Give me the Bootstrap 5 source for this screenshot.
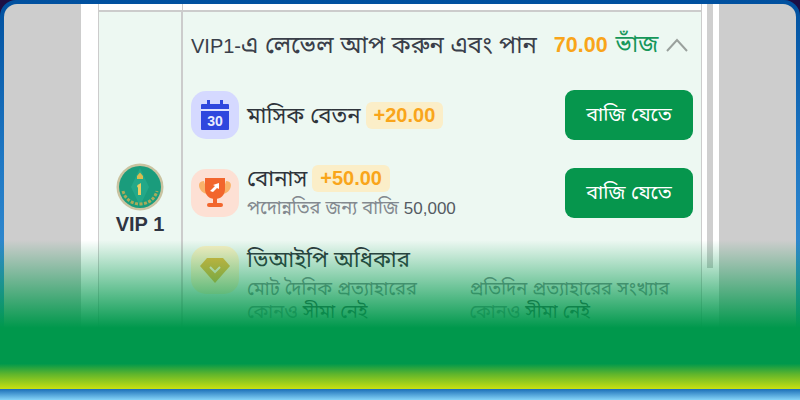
<!DOCTYPE html>
<html lang="bn">
  <head>
    <meta charset="UTF-8" />
    <title>VIP</title>
    <link
      rel="stylesheet"
      href="https://cdn.jsdelivr.net/npm/bootstrap@5.3.0/dist/css/bootstrap.min.css"
    />
    <style>
      html, body { margin: 0; height: 400px; overflow: hidden; }
      body {
        width: 800px;
        font-family: "Liberation Sans", "Noto Sans Bengali", "Noto Sans", "DejaVu Sans", sans-serif;
        background: #1c0f45;
      }
      .stage {
        height: 400px; padding: 4px 4px 0; position: relative; border-radius: 16px 16px 0 0;
        background: linear-gradient(180deg, #00509f 0%, #1f78c4 40%, #4ba3df 100%);
      }
      .shade-box { height: 396px; background: #cdcdcd; border-radius: 13px 13px 0 0; padding: 0 77px 0 77px; }
      .sheet { height: 396px; background: #fff; padding: 0 0 0 17px; }
      .scroll-track { width: 16px; background: #fff; padding: 0 0 0 5px; flex: none; }
      .scroll-thumb { width: 6px; height: 264px; background: #cfcfcf; }
      .vip-table { width: 604px; flex: none; border-left: 1px solid #ccc; border-right: 1px solid #ccc; }
      .vip-top { height: 6px; flex: none; border-bottom: 2px solid #ccc; box-sizing: content-box; }
      .vip-top-left { width: 84px; border-right: 1px solid #ccc; }
      .vip-row { background: #edf8f2; height: 390px; }
      .vip-side { width: 84px; flex: none; border-right: 2px solid #ccc; padding-top: 151px; }
      .vip-name { font-size: 20px; line-height: 24px; font-weight: 700; color: #2f3542; margin-top: 1px; }
      .vip-main { padding: 0 8px 0 8px; }
      .head-line { height: 66px; font-size: 20px; color: #3a3f4a; margin-bottom: 12px; white-space: nowrap; }
      .bn-big { font-size: 23.8px; }
      .gold { color: #f9a51a; font-weight: 700; font-size: 21.5px; margin-left: 17px; }
      .fold { color: #16975a; font-size: 23.4px; }
      .perk-line { min-height: 50px; margin-bottom: 27px; }
      .perk-second { margin-bottom: 28px; }
      .perk-ico { width: 48px; height: 48px; flex: none; border-radius: 15px; }
      .ico-blue { background: #d5d9ff; }
      .ico-peach { background: #fde0d4; }
      .ico-gold { background: #fbf0c4; }
      .perk-title { font-size: 22.2px; line-height: 27px; color: #2f343b; white-space: nowrap; }
      .perk-note { font-size: 18.3px; line-height: 23px; color: #83898f; white-space: nowrap; }
      .perk-stack { margin: -2px 0; }
      .perk-stack .perk-note { margin-top: 4px; }
      .note-num { font-size: 17px; color: #555b63; }
      .note-dark { color: #3c4148; }
      .perk-cols { width: 445px; }
      .bonus-tag { background: #fbeec8; color: #f9a51a; font-size: 20px; font-weight: 700; line-height: 27px; border-radius: 6px; padding: 0 8px; margin-left: 5px; }
      .go-btn { width: 128px; height: 50px; background: #06964d; border: 0; border-radius: 9px; color: #fff; font-size: 19.8px; padding: 0; flex: none; margin-left: auto; }
      .go-btn:hover { background: #06964d; color: #fff; }
      .fade-band {
        position: absolute; left: 0; right: 0; top: 240px; height: 149px;
        background: linear-gradient(180deg,
          rgba(0,152,76,0) 0%, #00984c 59%,
          #00984c 83%, #5fb52c 90%, #c9e011 100%);
      }
      .sea-band { position: absolute; left: 0; right: 0; top: 389px; height: 11px; background: linear-gradient(180deg, #1b6fb8, #85d4f7); }
    </style>
  </head>
  <body>
    <div class="stage">
      <div class="shade-box">
        <div class="sheet d-flex">
          <div class="vip-table d-flex flex-column">
            <div class="vip-top d-flex"><div class="vip-top-left"></div></div>
            <div class="vip-row d-flex">
              <div class="vip-side text-center">
                <svg width="48" height="48" viewBox="0 0 48 48" class="d-block mx-auto">
                  <circle cx="24" cy="24" r="23.5" fill="#c9c3a0" />
                  <circle cx="24" cy="24" r="21" fill="#1a9c7c" />
                  <path d="M24 5L33 24 24 43 15 24z" fill="#23a888" />
                  <path d="M7 28c2 8 9 13 17 13s15-5 17-13" fill="none" stroke="#a9ab5a" stroke-width="3" stroke-dasharray="3 1.5" />
                  <path d="M21 13l3-3.5 3 3.5v3h-6z" fill="#d9bb4e" />
                  <path d="M21.5 22l3.5-2v12h-3V24l-1 .5z" fill="#e6cd62" />
                </svg>
                <div class="vip-name">VIP 1</div>
              </div>
              <div class="vip-main flex-grow-1">
                <div class="head-line d-flex align-items-center">
                  <span>VIP1-<span class="bn-big">এ লেভেল আপ করুন এবং পান</span></span>
                  <span class="gold">70.00</span>
                  <span class="fold ms-2">ভাঁজ</span>
                  <svg class="ms-2" width="22" height="14" viewBox="0 0 22 14"><path d="M1 13L11 2l10 11" fill="none" stroke="#9aa19d" stroke-width="2" /></svg>
                </div>
                <div class="perk-line d-flex align-items-center">
                  <div class="perk-ico ico-blue d-flex align-items-center justify-content-center">
                    <svg width="30" height="30" viewBox="0 0 30 30">
                      <rect x="1" y="4" width="28" height="26" rx="1" fill="#2f47de" />
                      <rect x="7" y="0" width="3" height="7" fill="#2f47de" />
                      <rect x="20" y="0" width="3" height="7" fill="#2f47de" />
                      <rect x="1" y="9" width="28" height="2" fill="#dfe3ff" />
                      <text x="15" y="26" text-anchor="middle" font-size="14" font-weight="700" fill="#e8ebff" font-family="Liberation Sans">30</text>
                    </svg>
                  </div>
                  <span class="perk-title ms-2">মাসিক বেতন</span>
                  <span class="bonus-tag">+20.00</span>
                  <button class="btn go-btn">বাজি যেতে</button>
                </div>
                <div class="perk-line perk-second d-flex align-items-center">
                  <div class="perk-ico ico-peach d-flex align-items-center justify-content-center">
                    <svg width="34" height="32" viewBox="0 0 34 32">
                      <path d="M6 4C1 4 0 8 2 12s6 5 8 5zM28 4c5 0 6 4 4 8s-6 5-8 5z" fill="#f9b36a" />
                      <path d="M7 1h20v11c0 6-4 10-10 10S7 18 7 12z" fill="#f2662d" />
                      <rect x="15" y="21" width="4" height="6" fill="#f2662d" />
                      <rect x="9" y="26" width="16" height="4" rx="2" fill="#f2662d" />
                      <path d="M12 14l5-5-2-1 6-2v6l-2-1-4 4z" fill="#fff" />
                    </svg>
                  </div>
                  <div class="perk-stack ms-2">
                    <div class="d-flex align-items-center"><span class="perk-title">বোনাস</span><span class="bonus-tag">+50.00</span></div>
                    <div class="perk-note">পদোন্নতির জন্য বাজি <span class="note-num">50,000</span></div>
                  </div>
                  <button class="btn go-btn">বাজি যেতে</button>
                </div>
                <div class="d-flex">
                  <div class="perk-ico ico-gold d-flex align-items-center justify-content-center">
                    <svg width="30" height="26" viewBox="0 0 30 26">
                      <path d="M7 1h16l7 8-15 17L0 9z" fill="#e8b93c" />
                      <path d="M10 10l5 5 5-5" fill="none" stroke="#fdf3cf" stroke-width="2" />
                    </svg>
                  </div>
                  <div class="ms-2">
                    <div class="perk-title">ভিআইপি অধিকার</div>
                    <div class="perk-cols row g-0 mt-1">
                      <div class="col-6 perk-note">মোট দৈনিক প্রত্যাহারের<br />কোনও <span class="note-dark">সীমা নেই</span></div>
                      <div class="col-6 perk-note">প্রতিদিন প্রত্যাহারের সংখ্যার<br />কোনও <span class="note-dark">সীমা নেই</span></div>
                    </div>
                  </div>
                </div>
              </div>
            </div>
          </div>
          <div class="scroll-track"><div class="scroll-thumb"></div></div>
        </div>
      </div>
      <div class="fade-band"></div>
      <div class="sea-band"></div>
    </div>
    <script src="https://cdn.jsdelivr.net/npm/bootstrap@5.3.0/dist/js/bootstrap.bundle.min.js"></script>
  </body>
</html>
